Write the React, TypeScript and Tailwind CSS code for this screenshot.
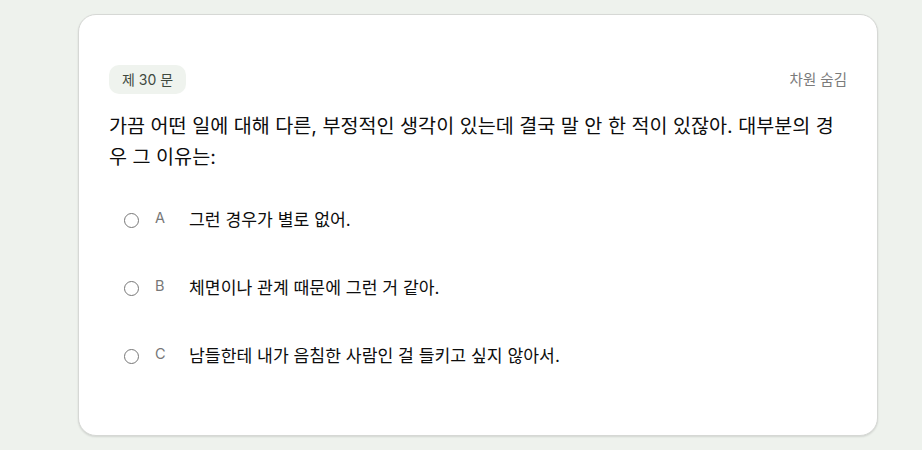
const options = [
  { key: "A", text: "그런 경우가 별로 없어." },
  { key: "B", text: "체면이나 관계 때문에 그런 거 같아." },
  { key: "C", text: "남들한테 내가 음침한 사람인 걸 들키고 싶지 않아서." },
]

export default function App() {
  return (
    <div
      className="min-h-[450px] bg-[#eef2ed] pt-[14px] pb-[14px]"
      style={{ fontFamily: '"Inter", "Noto Sans CJK KR", sans-serif' }}
    >
      <div className="ml-[78px] w-[800px] rounded-[18px] border border-[#d6d8d5] bg-white px-[30px] pt-[50px] pb-[67px] shadow-[0_1px_2px_rgba(0,0,0,0.12)]">
        {/* Header */}
        <div className="flex items-center justify-between">
          <span className="rounded-[10px] bg-[#eff3ee] px-[13px] py-[5px] text-[14px] leading-[19px] text-[#3f4a3f]">
            제 30 문
          </span>
          <button className="text-[14.5px] text-[#7b7b7b]">차원 숨김</button>
        </div>

        {/* Question */}
        <p className="mt-[17px] text-[19.6px] leading-[31px] text-[#0d0d0d]">
          가끔 어떤 일에 대해 다른, 부정적인 생각이 있는데 결국 말 안 한 적이 있잖아. 대부분의 경우 그 이유는:
        </p>

        {/* Options */}
        <div className="mt-[35px] flex flex-col gap-[44px] pl-[15px]">
          {options.map((o) => (
            <label key={o.key} className="flex items-center">
              <span className="h-[15px] w-[15px] rounded-full border-[1.5px] border-[#777]" />
              <span className="ml-[16px] w-[22px] -translate-y-[2px] text-[14.5px] text-[#777]">{o.key}</span>
              <span className="ml-[12px] text-[17.2px] leading-[24px] text-[#0d0d0d]">{o.text}</span>
            </label>
          ))}
        </div>
      </div>
    </div>
  )
}
